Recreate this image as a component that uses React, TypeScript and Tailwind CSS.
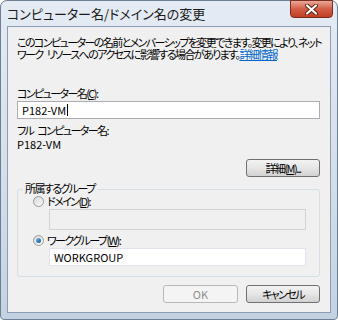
import React from "react";

function Radio({ checked }: { checked?: boolean }) {
  return (
    <div className="w-[11px] h-[11px] rounded-full border border-[#9a9a9a] bg-gradient-to-br from-[#d8d8d8] to-[#fbfbfb] flex items-center justify-center shrink-0">
      {checked && (
        <div className="w-[5px] h-[5px] rounded-full bg-gradient-to-br from-[#6fc3f3] to-[#0c4f8c]" />
      )}
    </div>
  );
}

function Button({
  children,
  disabled,
}: {
  children: React.ReactNode;
  disabled?: boolean;
}) {
  return (
    <div
      className={
        disabled
          ? "h-[18px] w-[75px] rounded-[3px] border border-[#b5b9bc] bg-[#f4f4f4] text-[#8d8d8d] flex items-center justify-center"
          : "h-[18px] w-[74px] rounded-[3px] border border-[#707070] bg-gradient-to-b from-[#f3f3f3] via-[#e6e6e6] to-[#d2d2d2] text-black flex items-center justify-center"
      }
    >
      {children}
    </div>
  );
}

export default function App() {
  return (
    <div className="w-[338px] h-[320px] bg-white font-['Noto_Sans_CJK_JP',sans-serif] text-[11px] leading-[12px] [font-feature-settings:'palt'] tracking-[-1.6px] text-black">
      <div className="relative w-full h-full border border-[#6d7f94] rounded-t-[7px] rounded-b-[4px] bg-gradient-to-b from-[#e4ebf3] via-[#d6e0eb] to-[#c3d2e2] flex flex-col">
        {/* title bar */}
        <div className="h-[25px] pl-[6px] flex items-center text-[13px] leading-[14px] tracking-normal text-[#1a1a1a] whitespace-nowrap">
          コンピューター名/ドメイン名の変更
        </div>
        <div className="absolute top-[-1px] right-[4px] w-[43px] h-[18px] rounded-b-[4px] border border-[#7a2d21] bg-gradient-to-b from-[#e9a797] via-[#d25d45] to-[#c13e22] flex items-center justify-center">
          <svg width="13" height="11" viewBox="0 0 13 11">
            <path d="M2 1.5 L11 9.5 M11 1.5 L2 9.5" stroke="#5b1e12" strokeWidth="4" strokeLinecap="round" />
            <path d="M2 1.5 L11 9.5 M11 1.5 L2 9.5" stroke="#ffffff" strokeWidth="2.2" strokeLinecap="round" />
          </svg>
        </div>

        {/* client */}
        <div className="mx-[6px] h-[287px] border border-[#8a9fb6] bg-[#f0f0f0] pl-[9px] pr-[10px] flex flex-col">
          <div className="mt-[9px] h-[24px] whitespace-nowrap">
            このコンピューターの名前とメンバーシップを変更できます。変更により、ネット
            <br />
            ワーク<span className="inline-block w-[4px]" />リソースへのアクセスに影響する場合があります。
            <span className="text-[#0066cc] underline">詳細情報</span>
          </div>

          <div className="mt-[27px] h-[12px] whitespace-nowrap">
            コンピューター名(<span className="underline">C</span>):
          </div>
          <div className="mt-[2px] h-[18px] border border-[#abadb3] bg-white pl-[4px] flex items-center tracking-normal">
            P182-VM
            <span className="ml-[1px] w-[1px] h-[12px] bg-black" />
          </div>

          <div className="mt-[5px] h-[12px] whitespace-nowrap">
            フル<span className="inline-block w-[4px]" />コンピューター名:
          </div>
          <div className="mt-[2px] h-[12px] tracking-normal">P182-VM</div>

          <div className="mt-[9px] flex justify-end">
            <Button>
              詳細(<span className="underline">M</span>)...
            </Button>
          </div>

          {/* group box */}
          <div className="relative mt-[12px] border border-[#d5dfe5] rounded-[3px] pb-[10px] flex flex-col">
            <div className="absolute top-[-7px] left-[5px] px-[2px] h-[11px] leading-[11px] bg-[#f0f0f0] whitespace-nowrap">
              所属するグループ
            </div>
            <div className="mt-[5px] ml-[15px] h-[12px] flex items-center gap-[3px]">
              <Radio />
              <span>
                ドメイン(<span className="underline">D</span>):
              </span>
            </div>
            <div className="mt-[2px] ml-[31px] w-[257px] h-[21px] border border-[#d0d3d7] bg-[#f0f0f0]" />

            <div className="mt-[4px] ml-[15px] h-[12px] flex items-center gap-[3px]">
              <Radio checked />
              <span>
                ワークグループ(<span className="underline">W</span>):
              </span>
            </div>
            <div className="mt-[2px] ml-[31px] w-[257px] h-[18px] border border-[#e2e3ea] bg-white pl-[4px] flex items-center tracking-normal">
              WORKGROUP
            </div>
          </div>

          <div className="mt-[8px] flex justify-end gap-[8px]">
            <Button disabled>
              <span className="tracking-normal">OK</span>
            </Button>
            <Button>キャンセル</Button>
          </div>
        </div>
      </div>
    </div>
  );
}
